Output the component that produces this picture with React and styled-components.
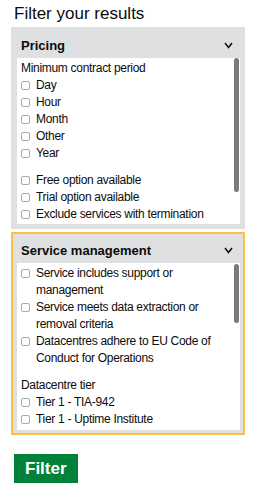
import React from 'react';
import styled, { createGlobalStyle } from 'styled-components';

const GlobalStyle = createGlobalStyle`
    body {
        margin: 0;
        background: #ffffff;
        color: #0b0c0c;
        font-family: "Liberation Sans", Arial, sans-serif;
    }
`

const filters = [
    {
        id: 'pricing',
        title: 'Pricing',
        focused: false,
        height: 166,
        thumb: { top: 0, height: 134 },
        groups: [
            {
                label: 'Minimum contract period',
                options: ['Day', 'Hour', 'Month', 'Other', 'Year'],
            },
            {
                options: [
                    'Free option available',
                    'Trial option available',
                    'Exclude services with termination',
                ],
            },
        ],
    },
    {
        id: 'service-management',
        title: 'Service management',
        focused: true,
        height: 167,
        thumb: { top: 1, height: 59 },
        groups: [
            {
                options: [
                    'Service includes support or management',
                    'Service meets data extraction or removal criteria',
                    'Datacentres adhere to EU Code of Conduct for Operations',
                ],
            },
            {
                label: 'Datacentre tier',
                options: [
                    'Tier 1 - TIA-942',
                    'Tier 1 - Uptime Institute',
                ],
            },
        ],
    },
];

const Chevron = () => (
    <svg width="9" height="7" viewBox="0 0 9 7">
        <polyline points="1,1 4.5,5.5 8,1" fill="none" stroke="#0b0c0c" strokeWidth="1.5" />
    </svg>
);

const App = () => {
    return (
        <Page>
            <GlobalStyle />
            <Heading>Filter your results</Heading>
            {filters.map((filter) => (
                <Panel key={filter.id} focused={filter.focused}>
                    <PanelHeader>
                        <PanelTitle>{filter.title}</PanelTitle>
                        <Chevron />
                    </PanelHeader>
                    <ScrollArea height={filter.height}>
                        {filter.groups.map((group, index) => (
                            <Group key={index}>
                                {group.label && <GroupLabel>{group.label}</GroupLabel>}
                                {group.options.map((option) => (
                                    <Option key={option}>
                                        <Checkbox type='checkbox' />
                                        <span>{option}</span>
                                    </Option>
                                ))}
                            </Group>
                        ))}
                        <Thumb style={{ top: filter.thumb.top, height: filter.thumb.height }} />
                    </ScrollArea>
                </Panel>
            ))}
            <FilterButton>Filter</FilterButton>
        </Page>
    )
}

const Page = styled.main`
    width: 234px;
    padding: 0 0 0 11px;
`

const Heading = styled.h2`
    margin: 4px 0 3px 3px;
    font-size: 17px;
    line-height: 20px;
    font-weight: 400;
`

const Panel = styled.section`
    display: flex;
    flex-direction: column;
    background: #dee0e2;
    border: 2px solid ${(props) => (props.focused ? '#ffbf47' : 'transparent')};
    margin-bottom: 3px;
`

const PanelHeader = styled.div`
    display: flex;
    align-items: center;
    justify-content: space-between;
    height: 26px;
    padding: 3px 10px 0 8px;
`

const PanelTitle = styled.h3`
    margin: 0;
    font-size: 13px;
    line-height: 15px;
    font-weight: 700;
`

const ScrollArea = styled.div`
    position: relative;
    height: ${(props) => props.height}px;
    margin: 0 3px 3px 4px;
    padding: 2px 10px 0 4px;
    box-sizing: border-box;
    overflow: hidden;
    background: #ffffff;
    font-size: 12px;
    line-height: 17px;
    letter-spacing: -0.3px;
`

const Group = styled.div`
    margin-bottom: 10px;
`

const GroupLabel = styled.div`
    margin-bottom: 0;
`

const Option = styled.label`
    display: flex;
    align-items: flex-start;
`

const Checkbox = styled.input`
    appearance: none;
    flex: none;
    width: 9px;
    height: 9px;
    margin: 4px 6px 0 0;
    border: 1px solid #a8abad;
    border-radius: 2px;
    background: #ffffff;
`

const Thumb = styled.div`
    position: absolute;
    right: 1px;
    width: 5px;
    border-radius: 3px;
    background: #7b7b7b;
`

const FilterButton = styled.button`
    margin: 16px 0 0 3px;
    height: 29px;
    padding: 0 11px;
    border: none;
    border-radius: 0;
    background: #00823b;
    box-shadow: 0 2px 0 #003618;
    color: #ffffff;
    font-family: "Liberation Sans", Arial, sans-serif;
    font-size: 17px;
    font-weight: 700;
`

export default App;
